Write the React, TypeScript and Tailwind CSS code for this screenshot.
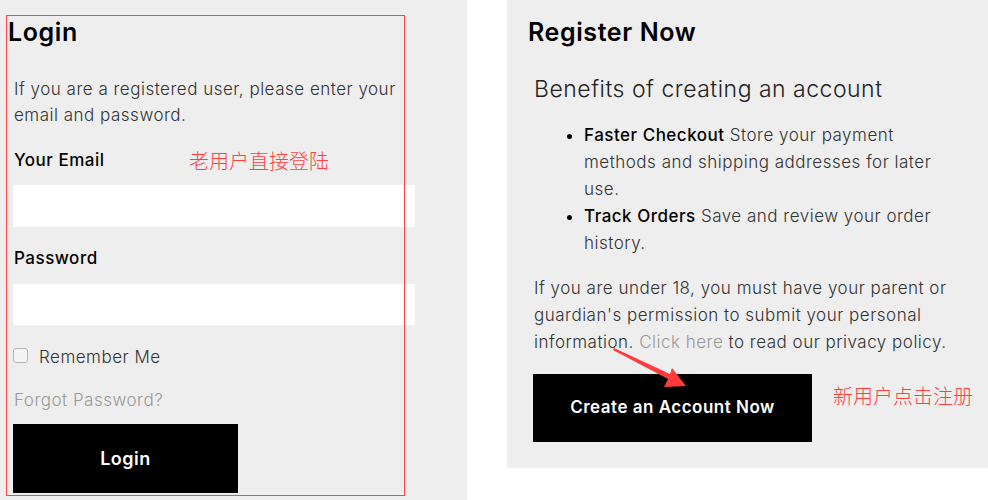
import React from 'react';

const font = "font-['Inter','Noto_Sans_CJK_SC',sans-serif]";

const Arrow: React.FC = () => (
  <svg className="absolute left-[606px] top-[346px] pointer-events-none" width="90" height="48" viewBox="0 0 90 48">
    {/* tapered shaft + head pointing down-right */}
    <polygon points="7,4 8,2 64,28 66,22 80,40 58,41 62,33" fill="#ff3b3b" />
  </svg>
);

const App: React.FC = () => {
  return (
    <div className={`relative flex w-[988px] h-[500px] bg-white ${font}`}>
      {/* Login column */}
      <div className="relative w-[467px] h-[500px] bg-[#eeeeee] shrink-0">
        <div className="absolute left-[6px] top-[15px] w-[399px] h-[481px] border border-[#ff4444] pointer-events-none" />
        <div className="pl-[8px] pt-[16px]">
          <h1 className="text-[25px] leading-[32px] font-semibold tracking-[0.6px] text-black">Login</h1>
        </div>
        <div className="pl-[13px] pr-[52px] tracking-[0.5px]">
          <p className="mt-[28px] text-[17px] leading-[26px] font-light text-[#333] pl-[1px]">
            If you are a registered user, please enter your email and password.
          </p>
          <div className="mt-[17px] flex items-center">
            <label className="pl-[1px] text-[17px] leading-[26px] font-medium text-black w-[176px]">Your Email</label>
            <span className="text-[20px] leading-[26px] font-light tracking-normal text-[#ff4040] mt-[4px]">老用户直接登陆</span>
          </div>
          <div className="mt-[10px] h-[42px] bg-white" />
          <label className="block mt-[18px] pl-[1px] text-[17px] leading-[26px] font-medium text-black">Password</label>
          <div className="mt-[13px] h-[41px] bg-white" />
          <div className="mt-[16px] flex items-center">
            <span className="w-[15px] h-[15px] rounded-[3px] border border-[#b5b5b5] bg-[#f4f4f4]" />
            <span className="ml-[11px] text-[17px] leading-[26px] font-light text-[#333] mt-[3px]">Remember Me</span>
          </div>
          <a className="block mt-[17px] pl-[1px] text-[17px] leading-[26px] font-light text-[#999]">Forgot Password?</a>
          <button className="mt-[11px] w-[225px] h-[69px] bg-black text-white text-[18px] font-semibold">Login</button>
        </div>
      </div>

      {/* Register column */}
      <div className="ml-[40px] w-[481px] h-[468px] bg-[#eeeeee] shrink-0 pl-[21px] pr-[8px] tracking-[0.5px]">
        <h2 className="pt-[16px] text-[25px] leading-[32px] font-semibold tracking-[0.6px] text-black">Register Now</h2>
        <h3 className="mt-[25px] pl-[6px] text-[23px] leading-[32px] font-light text-[#222]">Benefits of creating an account</h3>
        <ul className="mt-[17px] pl-[56px] pr-[26px] list-disc marker:text-black text-[17px] leading-[27px] font-light text-[#333]">
          <li>
            <span className="font-medium text-black">Faster Checkout</span> Store your payment methods and shipping addresses for later use.
          </li>
          <li>
            <span className="font-medium text-black">Track Orders</span> Save and review your order history.
          </li>
        </ul>
        <p className="mt-[18px] pl-[6px] pr-[12px] text-[17px] leading-[27px] font-light text-[#333]">
          If you are under 18, you must have your parent or guardian's permission to submit your personal information.{' '}
          <a className="text-[#999]">Click here</a> to read our privacy policy.
        </p>
        <div className="mt-[18px] flex items-start">
          <button className="shrink-0 ml-[5px] w-[279px] h-[68px] bg-black text-white text-[17px] font-semibold">Create an Account Now</button>
          <span className="ml-[21px] mt-[10px] whitespace-nowrap text-[20px] leading-[26px] font-light tracking-normal text-[#ff4040]">新用户点击注册</span>
        </div>
      </div>

      <Arrow />
    </div>
  );
};

export default App;
